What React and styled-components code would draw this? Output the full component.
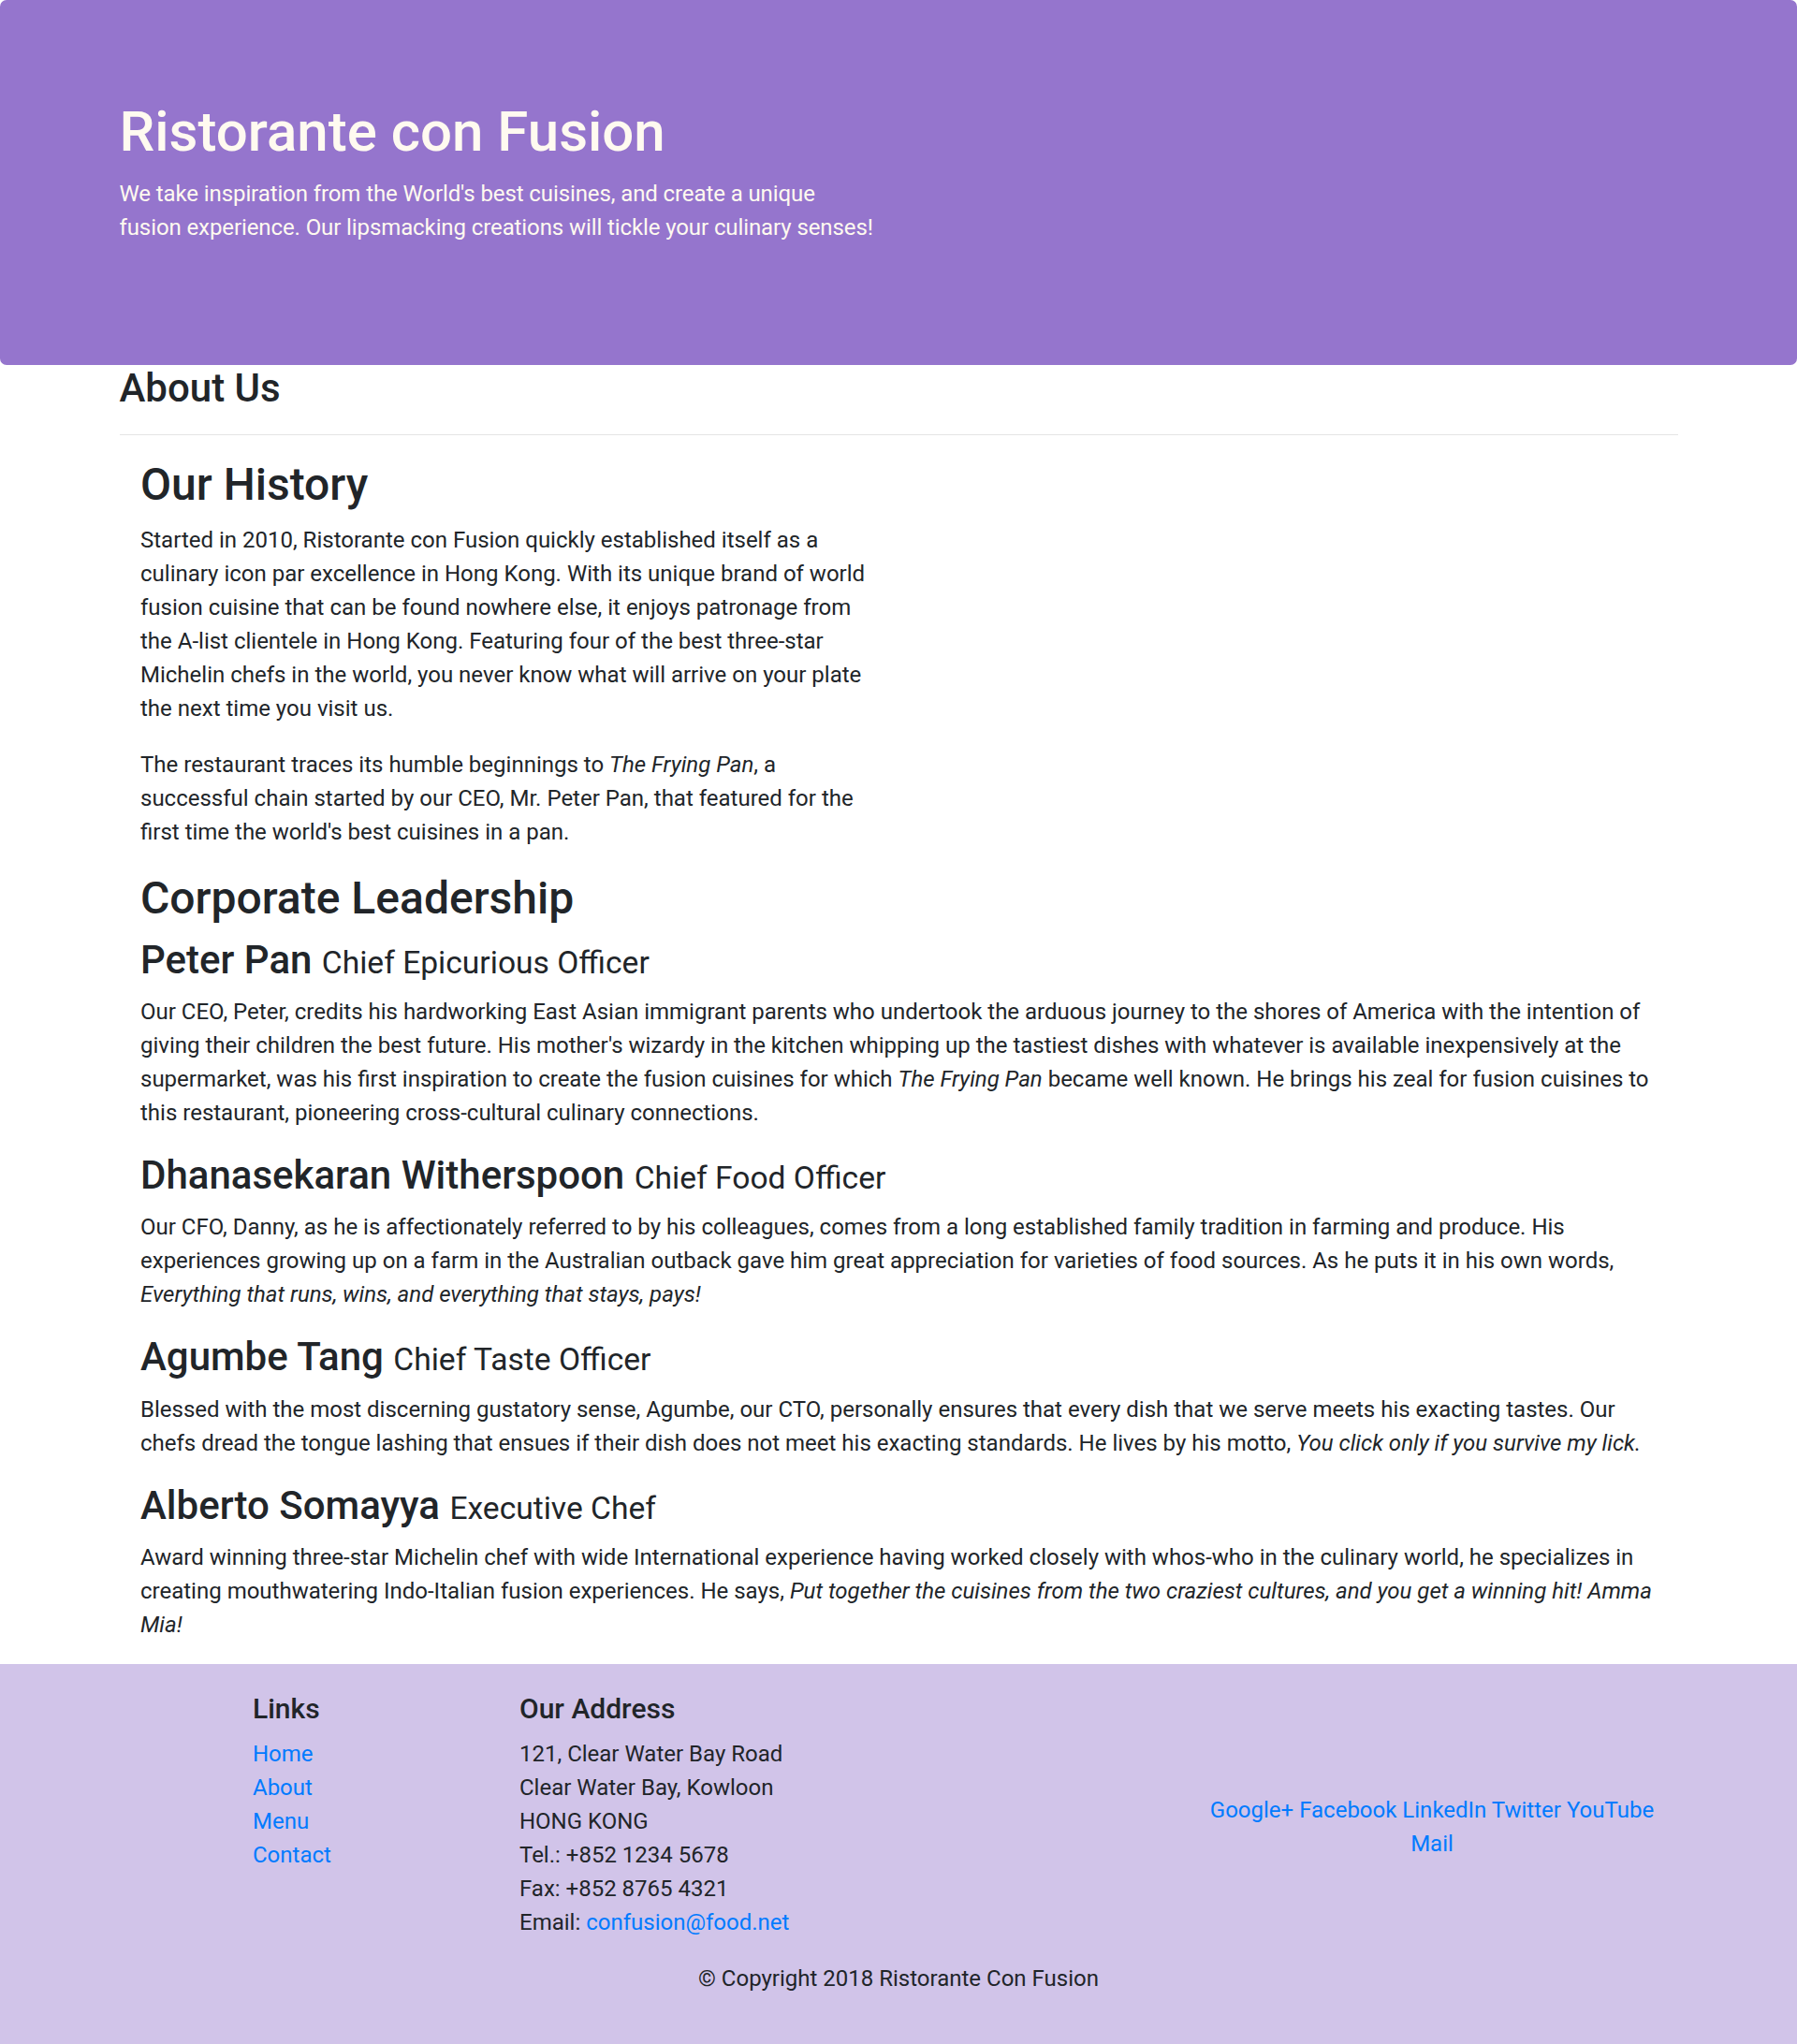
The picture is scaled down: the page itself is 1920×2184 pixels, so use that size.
import React from "react";
import styled, { createGlobalStyle } from "styled-components";

const GlobalStyle = createGlobalStyle`
  * {
    box-sizing: border-box;
  }
  body {
    margin: 0;
    font-family: "Segoe UI", Roboto, "Liberation Sans", Arial, sans-serif;
    font-size: 24px;
    line-height: 1.5;
    color: #212529;
    background: #ffffff;
  }
`;

const leaders = [
  {
    name: "Peter Pan",
    designation: "Chief Epicurious Officer",
    description: (
      <>
        Our CEO, Peter, credits his hardworking East Asian immigrant parents who
        undertook the arduous journey to the shores of America with the
        intention of giving their children the best future. His mother's wizardy
        in the kitchen whipping up the tastiest dishes with whatever is
        available inexpensively at the supermarket, was his first inspiration to
        create the fusion cuisines for which <em>The Frying Pan</em> became well
        known. He brings his zeal for fusion cuisines to this restaurant,
        pioneering cross-cultural culinary connections.
      </>
    ),
  },
  {
    name: "Dhanasekaran Witherspoon",
    designation: "Chief Food Officer",
    description: (
      <>
        Our CFO, Danny, as he is affectionately referred to by his colleagues,
        comes from a long established family tradition in farming and produce.
        His experiences growing up on a farm in the Australian outback gave him
        great appreciation for varieties of food sources. As he puts it in his
        own words, <em>Everything that runs, wins, and everything that stays, pays!</em>
      </>
    ),
  },
  {
    name: "Agumbe Tang",
    designation: "Chief Taste Officer",
    description: (
      <>
        Blessed with the most discerning gustatory sense, Agumbe, our CTO,
        personally ensures that every dish that we serve meets his exacting
        tastes. Our chefs dread the tongue lashing that ensues if their dish
        does not meet his exacting standards. He lives by his motto,{" "}
        <em>You click only if you survive my lick.</em>
      </>
    ),
  },
  {
    name: "Alberto Somayya",
    designation: "Executive Chef",
    description: (
      <>
        Award winning three-star Michelin chef with wide International
        experience having worked closely with whos-who in the culinary world, he
        specializes in creating mouthwatering Indo-Italian fusion experiences.
        He says,{" "}
        <em>
          Put together the cuisines from the two craziest cultures, and you get
          a winning hit! Amma Mia!
        </em>
      </>
    ),
  },
];

const socials = ["Google+", "Facebook", "LinkedIn", "Twitter", "YouTube", "Mail"];

function App() {
  return (
    <>
      <GlobalStyle />
      <Jumbotron>
        <Container>
          <HeaderRow>
            <HeaderCol>
              <Title>Ristorante con Fusion</Title>
              <Lead>
                We take inspiration from the World's best cuisines, and create a
                unique fusion experience. Our lipsmacking creations will tickle
                your culinary senses!
              </Lead>
            </HeaderCol>
          </HeaderRow>
        </Container>
      </Jumbotron>

      <Container>
        <PageHead>
          <H3>About Us</H3>
          <Rule />
        </PageHead>

        <Content>
          <HalfCol>
            <H2>Our History</H2>
            <P>
              Started in 2010, Ristorante con Fusion quickly established itself
              as a culinary icon par excellence in Hong Kong. With its unique
              brand of world fusion cuisine that can be found nowhere else, it
              enjoys patronage from the A-list clientele in Hong Kong. Featuring
              four of the best three-star Michelin chefs in the world, you never
              know what will arrive on your plate the next time you visit us.
            </P>
            <P>
              The restaurant traces its humble beginnings to{" "}
              <em>The Frying Pan</em>, a successful chain started by our CEO, Mr.
              Peter Pan, that featured for the first time the world's best
              cuisines in a pan.
            </P>
          </HalfCol>
        </Content>

        <Content>
          <FullCol>
            <H2>Corporate Leadership</H2>
            {leaders.map((leader) => (
              <Leader key={leader.name}>
                <H3>
                  {leader.name} <Small>{leader.designation}</Small>
                </H3>
                <P>{leader.description}</P>
              </Leader>
            ))}
          </FullCol>
        </Content>
      </Container>

      <Footer>
        <Container>
          <FooterRow>
            <LinksCol>
              <H5>Links</H5>
              <LinkList>
                <li><Link href="#">Home</Link></li>
                <li><Link href="#">About</Link></li>
                <li><Link href="#">Menu</Link></li>
                <li><Link href="#">Contact</Link></li>
              </LinkList>
            </LinksCol>
            <AddressCol>
              <H5>Our Address</H5>
              <Address>
                121, Clear Water Bay Road
                <br />
                Clear Water Bay, Kowloon
                <br />
                HONG KONG
                <br />
                Tel.: +852 1234 5678
                <br />
                Fax: +852 8765 4321
                <br />
                Email: <Link href="#">confusion@food.net</Link>
              </Address>
            </AddressCol>
            <SocialCol>
              <Social>
                {socials.map((s, i) => (
                  <React.Fragment key={s}>
                    <Link href="#">{s}</Link>
                    {i < socials.length - 1 ? " " : null}
                  </React.Fragment>
                ))}
              </Social>
            </SocialCol>
          </FooterRow>
          <CopyRow>
            <Copy>© Copyright 2018 Ristorante Con Fusion</Copy>
          </CopyRow>
        </Container>
      </Footer>
    </>
  );
}

export default App;

const Jumbotron = styled.header`
  background: #9575cd;
  color: floralwhite;
  padding: 105px 45px;
  border-radius: 7px;
`;

const Container = styled.div`
  width: 100%;
  max-width: 1710px;
  margin: 0 auto;
  padding: 0 22.5px;
`;

const HeaderRow = styled.div`
  display: flex;
  margin: 0 -22.5px;
`;

const HeaderCol = styled.div`
  flex: 0 0 50%;
  max-width: 50%;
  padding: 0 22.5px;
`;

const Title = styled.h1`
  margin: 0 0 12px;
  font-size: 60px;
  font-weight: 500;
  line-height: 1.2;
`;

const Lead = styled.p`
  margin: 0 0 24px;
  letter-spacing: -0.1px;
`;

const PageHead = styled.div`
  display: flow-root;
`;

const H3 = styled.h3`
  margin: 0 0 12px;
  font-size: 42px;
  font-weight: 500;
  line-height: 1.2;
`;

const Small = styled.small`
  font-size: 80%;
  font-weight: 400;
`;

const Rule = styled.hr`
  margin: 24px 0;
  border: 0;
  border-top: 1.5px solid rgba(0, 0, 0, 0.1);
`;

const Content = styled.div`
  display: flex;
  flex-wrap: wrap;
`;

const HalfCol = styled.div`
  flex: 0 0 50%;
  max-width: 50%;
  padding: 0 22.5px;
`;

const FullCol = styled.div`
  flex: 0 0 100%;
  padding: 0 22.5px;
`;

const H2 = styled.h2`
  margin: 0 0 12px;
  font-size: 48px;
  font-weight: 500;
  line-height: 1.2;
`;

const P = styled.p`
  margin: 0 0 24px;
`;

const Leader = styled.div``;

const Footer = styled.footer`
  background: #d1c4e9;
  padding: 30px 0;
`;

const FooterRow = styled.div`
  display: flex;
  margin: 0 -22.5px;
`;

const Col = styled.div`
  padding: 0 22.5px;
`;

const LinksCol = styled(Col)`
  flex: 0 0 16.6667%;
  margin-left: 8.3333%;
`;

const AddressCol = styled(Col)`
  flex: 0 0 41.6667%;
`;

const SocialCol = styled(Col)`
  flex: 0 0 33.3333%;
  align-self: center;
`;

const H5 = styled.h5`
  margin: 0 0 12px;
  font-size: 30px;
  font-weight: 500;
  line-height: 1.2;
`;

const LinkList = styled.ul`
  list-style: none;
  margin: 0 0 24px;
  padding: 0;
`;

const Address = styled.address`
  margin: 0 0 24px;
  font-style: normal;
`;

const Link = styled.a`
  color: #007bff;
  text-decoration: none;
`;

const Social = styled.div`
  text-align: center;
`;

const CopyRow = styled.div`
  display: flex;
  justify-content: center;
`;

const Copy = styled.p`
  margin: 0 0 24px;
`;
